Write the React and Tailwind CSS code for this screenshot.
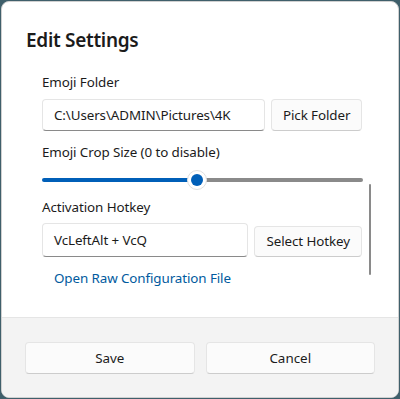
import React from "react";

export default function App() {
  const font = { fontFamily: '"Noto Sans", "Open Sans", sans-serif' };
  return (
    <div className="w-[400px] h-[399px] bg-[#3f5f6b] p-[1px]" style={font}>
      <div className="relative w-full h-full bg-white rounded-[8px] overflow-hidden flex flex-col border border-[#d0d0d0]">
        <div className="flex-1 flex flex-col pt-[24px] pl-[24px] pr-[36px]">
          <div className="text-[19px] leading-[28px] font-semibold tracking-[-0.3px] text-[#1b1b1b]">Edit Settings</div>
          <div className="flex flex-col pl-[16px] pt-[18px] text-[13.4px] tracking-[-0.1px]">
            <div className="leading-[20px] text-[#1b1b1b]">Emoji Folder</div>
            <div className="flex gap-[6px] mt-[7px]">
              <div className="w-[224px] h-[32px] flex items-center pl-[11px] rounded-[4px] border border-[#e5e5e5] border-b-[#8a8a8a] text-[#1b1b1b]">
                C:\Users\ADMIN\Pictures\4K
              </div>
              <div className="w-[91px] h-[32px] flex items-center justify-center rounded-[4px] border border-[#e5e5e5] border-b-[#cccccc] bg-[#fbfbfb] text-[#1b1b1b]">
                Pick Folder
              </div>
            </div>
            <div className="leading-[20px] text-[#1b1b1b] mt-[11px]">Emoji Crop Size (0 to disable)</div>
            <div className="relative h-[28px] flex items-center mt-[4px] w-[321px]">
              <div className="h-[4px] w-[155px] bg-[#005fb8] rounded-l-full"></div>
              <div className="h-[4px] flex-1 bg-[#8a8a8a] rounded-r-full"></div>
              <div className="absolute left-[145px] top-[4px] w-[20px] h-[20px] rounded-full bg-white border border-[#e0e0e0] flex items-center justify-center">
                <div className="w-[12px] h-[12px] rounded-full bg-[#005fb8]"></div>
              </div>
            </div>
            <div className="leading-[20px] text-[#1b1b1b] mt-[3px]">Activation Hotkey</div>
            <div className="flex gap-[6px] mt-[6px] items-end">
              <div className="w-[207px] h-[34px] flex items-center pl-[11px] rounded-[4px] border border-[#e5e5e5] border-b-[#8a8a8a] text-[#1b1b1b]">
                VcLeftAlt + VcQ
              </div>
              <div className="w-[108px] h-[31px] flex items-center justify-center rounded-[4px] border border-[#e5e5e5] border-b-[#cccccc] bg-[#fbfbfb] text-[#1b1b1b]">
                Select Hotkey
              </div>
            </div>
            <div className="leading-[20px] text-[#005a9e] mt-[11px] pl-[12px]">Open Raw Configuration File</div>
          </div>
        </div>
        <div className="absolute left-[367px] top-[182px] w-[2px] h-[91px] bg-[#8a8a8a] rounded-full"></div>
        <div className="h-[80px] bg-[#f3f3f3] border-t border-[#e5e5e5] flex gap-[11px] px-[23px] pt-[24px] text-[13.4px]">
          <div className="w-[170px] h-[32px] flex items-center justify-center rounded-[4px] border border-[#e5e5e5] border-b-[#cccccc] bg-[#fbfbfb] text-[#1b1b1b]">
            Save
          </div>
          <div className="w-[170px] h-[32px] flex items-center justify-center rounded-[4px] border border-[#e5e5e5] border-b-[#cccccc] bg-[#fbfbfb] text-[#1b1b1b]">
            Cancel
          </div>
        </div>
      </div>
    </div>
  );
}
